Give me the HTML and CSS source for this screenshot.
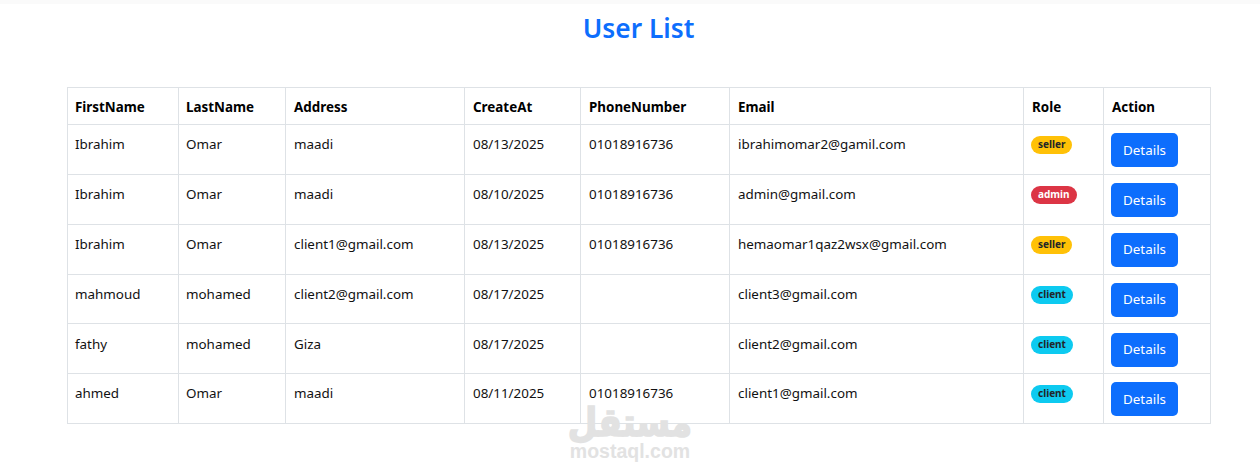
FILE: index.html
```html
<!DOCTYPE html>
<html lang="en">
<head>
<meta charset="utf-8">
<title>User List</title>
<link rel="stylesheet" href="styles.css">
</head>
<body>
<div class="topbar"></div>
<main class="page">
  <h1 class="title">User List</h1>
  <table class="users">
    <colgroup>
      <col class="c1"><col class="c2"><col class="c3"><col class="c4"><col class="c5"><col class="c6"><col class="c7"><col class="c8">
    </colgroup>
    <thead>
      <tr><th>FirstName</th><th>LastName</th><th>Address</th><th>CreateAt</th><th>PhoneNumber</th><th>Email</th><th>Role</th><th>Action</th></tr>
    </thead>
    <tbody>
      <tr><td>Ibrahim</td><td>Omar</td><td>maadi</td><td>08/13/2025</td><td>01018916736</td><td>ibrahimomar2@gamil.com</td><td><span class="badge seller">seller</span></td><td><button class="btn">Details</button></td></tr>
      <tr><td>Ibrahim</td><td>Omar</td><td>maadi</td><td>08/10/2025</td><td>01018916736</td><td>admin@gmail.com</td><td><span class="badge admin">admin</span></td><td><button class="btn">Details</button></td></tr>
      <tr><td>Ibrahim</td><td>Omar</td><td>client1@gmail.com</td><td>08/13/2025</td><td>01018916736</td><td>hemaomar1qaz2wsx@gmail.com</td><td><span class="badge seller">seller</span></td><td><button class="btn">Details</button></td></tr>
      <tr><td>mahmoud</td><td>mohamed</td><td>client2@gmail.com</td><td>08/17/2025</td><td></td><td>client3@gmail.com</td><td><span class="badge client">client</span></td><td><button class="btn">Details</button></td></tr>
      <tr><td>fathy</td><td>mohamed</td><td>Giza</td><td>08/17/2025</td><td></td><td>client2@gmail.com</td><td><span class="badge client">client</span></td><td><button class="btn">Details</button></td></tr>
      <tr><td>ahmed</td><td>Omar</td><td>maadi</td><td>08/11/2025</td><td>01018916736</td><td>client1@gmail.com</td><td><span class="badge client">client</span></td><td><button class="btn">Details</button></td></tr>
    </tbody>
  </table>
</main>
<div class="watermark">
  <span class="wm-ar" lang="ar" dir="rtl">مستقل</span>
  <span class="wm-en">mostaql.com</span>
</div>
</body>
</html>
```
FILE: styles.css
```css
* { box-sizing: border-box; }
html, body { margin: 0; padding: 0; background: #fff; }
body {
  height: 471px;
  overflow: hidden;
  position: relative;
  font-family: "Noto Sans", "Open Sans", "Liberation Sans", sans-serif;
  font-size: 13.4px;
  color: #111;
}
.topbar { height: 4px; background: #fafafa; }
.page { padding: 0 50px 0 67px; }
.title {
  margin: 7px 0 41px;
  height: 35px;
  line-height: 35px;
  text-align: center;
  font-size: 26.3px;
  font-weight: 600;
  color: #0d6efd;
}
.users {
  width: 1143px;
  table-layout: fixed;
  border-collapse: collapse;
  border: 1px solid #dee2e6;
}
.c1 { width: 111px; }
.c2 { width: 107px; }
.c3 { width: 179px; }
.c4 { width: 116px; }
.c5 { width: 149px; }
.c6 { width: 294px; }
.c7 { width: 80px; }
.c8 { width: 107px; }
th, td {
  border: 1px solid #dee2e6;
  text-align: left;
  vertical-align: top;
  line-height: 23px;
}
th { padding: 8.4px 8px 4.8px; font-weight: 700; color: #000; }
td { padding: 8.2px 8px 6.6px; height: 49.8px; }
th:nth-child(-n+2), td:nth-child(-n+2) { padding-left: 7px; }
.badge {
  display: inline-block;
  height: 18px;
  margin: 3px 0 0 -1px;
  padding: 0 7px;
  border-radius: 9px;
  font-size: 10px;
  font-weight: 700;
  line-height: 17px;
  vertical-align: top;
}
.seller { background: #ffc107; color: #212529; }
.admin { background: #dc3545; color: #fff; }
.client { background: #0dcaf0; color: #212529; }
.btn {
  display: block;
  width: 67px;
  height: 34px;
  margin-left: -1px;
  padding: 0;
  border: 0;
  border-radius: 5px;
  background: #0d6efd;
  color: #fff;
  font: inherit;
}
.watermark {
  position: absolute;
  left: 560px;
  top: 409px;
  width: 140px;
  display: flex;
  flex-direction: column;
  align-items: center;
  color: #e2e2e2;
  pointer-events: none;
}
.wm-ar {
  font-family: "DejaVu Sans", sans-serif;
  font-size: 34px;
  font-weight: 700;
  line-height: 33px;
  -webkit-text-stroke: 1.5px #e2e2e2;
  transform: scaleY(1.15);
  transform-origin: bottom;
}
.wm-en {
  font-family: "Liberation Sans", sans-serif;
  font-size: 19.5px;
  font-weight: 700;
  line-height: 18px;
}
```
